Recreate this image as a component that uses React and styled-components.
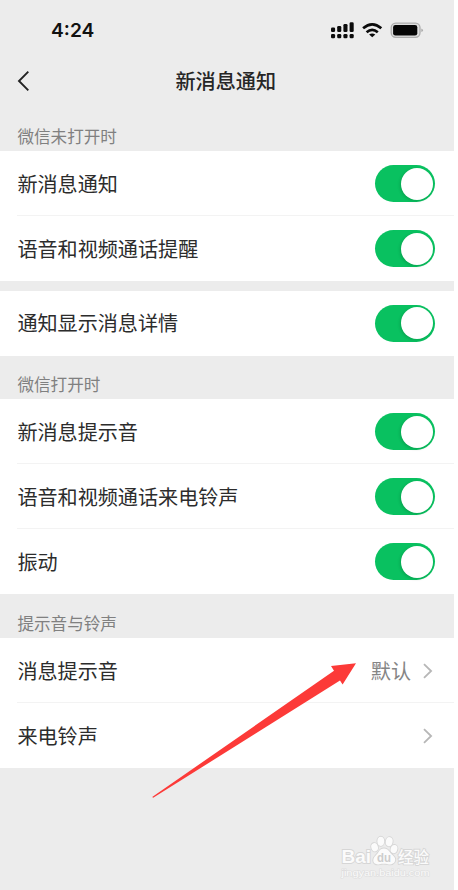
import React from "react";
import styled, { createGlobalStyle } from "styled-components";

const GlobalStyle = createGlobalStyle`
  * { box-sizing: border-box; }
  body { margin: 0; background: #fff; font-family: Inter, "Noto Sans CJK SC", sans-serif; }
`;

const Screen = styled.main`
  position: relative;
  width: 453.5px;
  height: 890px;
  background: #ececec;
  overflow: hidden;
`;

const StatusBar = styled.div`
  display: flex;
  align-items: center;
  justify-content: space-between;
  height: 60px;
  padding: 0 30px 0 51px;
`;

const Clock = styled.time`
  font-size: 19.2px;
  font-weight: 600;
  line-height: 24px;
  color: #111;
`;

const StatusIcons = styled.svg`
  display: block;
  width: 94px;
  height: 20px;
`;

const NavBar = styled.header`
  display: grid;
  grid-template-columns: 60px 1fr 62px;
  align-items: center;
  height: 42px;
  text-align: center;
`;

const BackButton = styled.button`
  display: flex;
  width: 60px;
  height: 42px;
  padding: 0 0 0 16px;
  border: 0;
  background: none;
  align-items: center;
`;

const Title = styled.h1`
  margin: 0;
  font: 500 20.1px/30px "Noto Sans CJK SC", sans-serif;
  color: #262626;
`;

const SectionTitle = styled.h2`
  height: ${(p) => p.$height}px;
  margin: 0;
  padding: ${(p) => p.$height - 27.4}px 17.4px 0;
  font: 400 16.6px/24px "Noto Sans CJK SC", sans-serif;
  color: #808080;
`;

const Group = styled.section`
  background: #fff;
  margin-top: ${(p) => (p.$gap ? 10 : 0)}px;
`;

const Row = styled.div`
  display: flex;
  align-items: center;
  height: ${(p) => p.$height || 65}px;
  margin-left: 17.4px;
  padding-right: ${(p) => (p.$link ? 20 : 18.5)}px;

  &:not(:last-child) {
    box-shadow: inset 0 -1px #f3f3f3;
  }
`;

const Label = styled.span`
  flex: 1;
  font: 400 20.1px/30px "Noto Sans CJK SC", sans-serif;
  color: #2c2c2c;
`;

const Value = styled.span`
  margin-right: 8.5px;
  font: 400 20.1px/30px "Noto Sans CJK SC", sans-serif;
  color: #858585;
`;

const Toggle = styled.button`
  display: flex;
  align-items: center;
  justify-content: flex-end;
  width: 60px;
  height: 36.5px;
  padding: 0 2.5px;
  border: 0;
  border-radius: 19px;
  background: #09c160;
`;

const Knob = styled.span`
  width: 32px;
  height: 32px;
  border-radius: 50%;
  background: #fff;
  box-shadow: -1px 1px 3px rgba(0, 60, 25, 0.22);
`;

const Arrow = styled.svg`
  position: absolute;
  left: 150px;
  top: 660px;
  width: 208px;
  height: 140px;
  pointer-events: none;
`;

const Watermark = styled.svg`
  position: absolute;
  left: 338px;
  top: 832px;
  width: 96px;
  height: 50px;
  paint-order: stroke;
`;

const LatinMark = styled.text`
  font: ${(p) => p.$weight || 700} ${(p) => p.$size}px "Liberation Sans", sans-serif;
`;

const ChineseMark = styled.text`
  font: 500 15.5px "Noto Sans CJK SC", sans-serif;
`;

const StatusGlyphs = () => (
  <StatusIcons viewBox="330 20 94 20" aria-hidden="true">
    <g fill="#0b0b0b">
      {[27.4, 26, 24, 22.2].map((top, i) => (
        <g key={top}>
          <rect x={331 + i * 6.2} y={top} width="4.1" height={32 - top} rx="1.3" />
          <rect x={331 + i * 6.2} y="34" width="4.1" height="4.3" rx="1.3" />
        </g>
      ))}
    </g>
    <g fill="none" stroke="#0b0b0b" strokeWidth="2.7">
      <path d="M363.1 28.3Q372.2 20.3 381.3 28.3" />
      <path d="M366.6 32.2Q372.2 27.4 377.8 32.2" />
    </g>
    <path d="M369.1 34.6Q372.2 32.2 375.3 34.6L372.2 37.3Z" fill="#0b0b0b" />
    <rect x="391.2" y="23.1" width="28.8" height="14.2" rx="4.5" fill="#dedede" stroke="#adadad" strokeWidth="1.3" />
    <rect x="393.1" y="25" width="24.2" height="10.6" rx="2.3" fill="#050505" />
    <path d="M421.3 28.4Q425 30.2 421.3 32Z" fill="#aaa" />
  </StatusIcons>
);

const Chevron = () => (
  <svg width="14" height="18" viewBox="0 0 14 18" fill="none" aria-hidden="true">
    <path d="M4 2.1L11.1 9L4 15.9" stroke="#b7b7b7" strokeWidth="1.8" />
  </svg>
);

const SwitchRow = ({ label, height }) => (
  <Row $height={height}>
    <Label>{label}</Label>
    <Toggle role="switch" aria-checked="true" aria-label={label}>
      <Knob />
    </Toggle>
  </Row>
);

const LinkRow = ({ label, value }) => (
  <Row $link>
    <Label>{label}</Label>
    {value && <Value>{value}</Value>}
    <Chevron />
  </Row>
);

const BaiduMark = () => (
  <Watermark viewBox="338 832 96 50">
    <g fill="#fbfbfb" stroke="#d6d6d6" strokeWidth="1.8">
      <LatinMark x="341.5" y="863.3" $size={19} textLength="29.5" lengthAdjust="spacingAndGlyphs">Bai</LatinMark>
      <ellipse cx="374.6" cy="847.2" rx="3.3" ry="4.2" transform="rotate(-15 374.6 847.2)" />
      <ellipse cx="380.8" cy="841.3" rx="3.4" ry="4.6" />
      <ellipse cx="389.2" cy="841.7" rx="3.4" ry="4.6" transform="rotate(10 389.2 841.7)" />
      <ellipse cx="394" cy="849.1" rx="3.3" ry="4.2" transform="rotate(18 394 849.1)" />
      <path d="M384 848.5C389 848.5 389 852.5 393 855.5C398 860 394 865.5 388 864.2C385.5 863.6 382 863.6 379.5 864.2C373 865.5 371.5 859.5 375.5 855.8C379 852.8 379 848.5 384 848.5Z" />
      <ChineseMark x="398" y="863" textLength="31" lengthAdjust="spacingAndGlyphs">经验</ChineseMark>
    </g>
    <LatinMark x="377" y="861.8" $size={13} fill="#cdcdcd" textLength="14" lengthAdjust="spacingAndGlyphs">du</LatinMark>
    <LatinMark x="341.5" y="875.8" $size={9.5} $weight={400} fill="#fafafa" stroke="#dedede" strokeWidth="1.2" textLength="88" lengthAdjust="spacingAndGlyphs">
      jingyan.baidu.com
    </LatinMark>
  </Watermark>
);

export default function App() {
  return (
    <Screen>
      <GlobalStyle />
      <StatusBar>
        <Clock>4:24</Clock>
        <StatusGlyphs />
      </StatusBar>
      <NavBar>
        <BackButton aria-label="返回">
          <svg width="14" height="22" viewBox="0 0 14 22" fill="none">
            <path d="M12.3 1.7L3 11L12.3 20.3" stroke="#222" strokeWidth="1.9" />
          </svg>
        </BackButton>
        <Title>新消息通知</Title>
      </NavBar>

      <SectionTitle $height={49}>微信未打开时</SectionTitle>
      <Group>
        <SwitchRow label="新消息通知" />
        <SwitchRow label="语音和视频通话提醒" />
      </Group>
      <Group $gap>
        <SwitchRow label="通知显示消息详情" height={64.5} />
      </Group>

      <SectionTitle $height={43.5}>微信打开时</SectionTitle>
      <Group>
        <SwitchRow label="新消息提示音" />
        <SwitchRow label="语音和视频通话来电铃声" />
        <SwitchRow label="振动" />
      </Group>

      <SectionTitle $height={44}>提示音与铃声</SectionTitle>
      <Group>
        <LinkRow label="消息提示音" value="默认" />
        <LinkRow label="来电铃声" />
      </Group>

      <Arrow viewBox="150 660 208 140" aria-hidden="true">
        <path d="M152.2 797L334 670.8L331 666L356 663.2L342.6 684.6L340 680.5L153.2 797.8Z" fill="#fc3a38" />
      </Arrow>
      <BaiduMark />
    </Screen>
  );
}
